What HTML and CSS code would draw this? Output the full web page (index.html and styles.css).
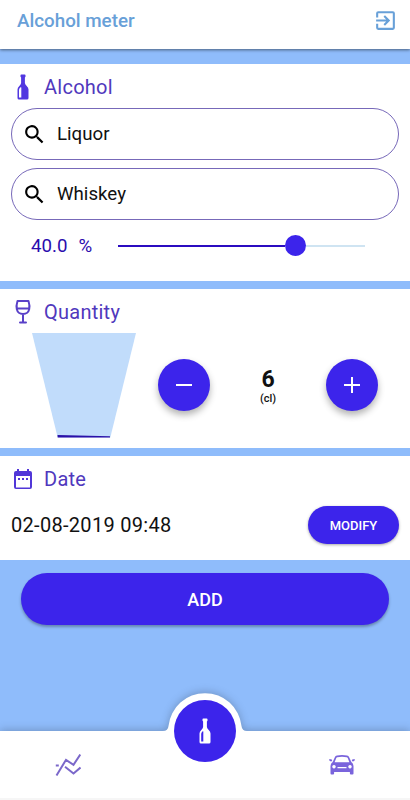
FILE: index.html
```html
<!DOCTYPE html>
<html lang="en">
<head>
<meta charset="UTF-8" />
<meta name="viewport" content="width=device-width, initial-scale=1" />
<title>Alcohol meter</title>
<link rel="stylesheet" href="styles.css">
</head>
<body>

<header class="topbar">
  <h1>Alcohol meter</h1>
  <button class="logout" type="button" aria-label="Log out">
    <svg viewBox="0 0 24 24" width="25" height="25" fill="currentColor"><path d="M10.09 15.59 11.5 17l5-5-5-5-1.41 1.41L12.67 11H3v2h9.67zM19 3H5a2 2 0 0 0-2 2v4h2V5h14v14H5v-4H3v4a2 2 0 0 0 2 2h14a2 2 0 0 0 2-2V5a2 2 0 0 0-2-2z"/></svg>
  </button>
</header>

<main>
  <section class="card alcohol">
    <h2>
      <svg class="icon" viewBox="0 0 24 26" width="24" height="26"><path fill="#5137e0" d="M10.300.5h3.400q.8 0 .8.800v1.500l-.6.700v5.500q.2 1.500 1.800 3 1.800 1.500 1.800 3.500v8.500q0 1.500-1.500 1.500H8q-1.500 0-1.500-1.500v-8.500q0-2 1.800-3.500 1.600-1.500 1.800-3V3.500l-.6-.7V1.300q0-.8.800-.8z"/><path fill="#fff" d="M8 16q0-1.500 1.200-2.500.8-.6 1.100 0V23.500H8z"/></svg>
      Alcohol
    </h2>
    <div class="search">
      <svg viewBox="0 0 24 24" width="25" height="25"><path d="M15.500 14h-.79l-.28-.27A6.500 6.500 0 1 0 13.730 14.430l.27.28v.79l5 4.990L20.490 19zm-6 0a4.500 4.500 0 1 1 0-9 4.500 4.500 0 0 1 0 9z"/></svg>
      <span>Liquor</span>
    </div>
    <div class="search">
      <svg viewBox="0 0 24 24" width="25" height="25"><path d="M15.500 14h-.79l-.28-.27A6.500 6.500 0 1 0 13.730 14.430l.27.28v.79l5 4.990L20.490 19zm-6 0a4.500 4.500 0 1 1 0-9 4.500 4.500 0 0 1 0 9z"/></svg>
      <span>Whiskey</span>
    </div>
    <div class="degree">
      <span class="value">40.0</span>
      <span class="unit">%</span>
      <div class="slider">
        <div class="filled"></div>
        <div class="thumb"></div>
        <div class="rest"></div>
      </div>
    </div>
  </section>

  <section class="card quantity">
    <h2>
      <svg class="icon" viewBox="0 0 24 26" width="24" height="26" fill="none" stroke="#5940c8" stroke-width="2" stroke-linecap="round" stroke-linejoin="round"><path d="M6.500 2h11c1.600 5 2 13-5.500 13S4.900 7 6.500 2zM6 9.500h12M12 15v8M9 23.500h6"/></svg>
      Quantity
    </h2>
    <div class="pour">
      <svg class="glass" viewBox="0 0 104 105" width="104" height="105"><path fill="#c1dcfb" d="M0 0h104L78.300 104.500H25.700z"/><path fill="#2a10a8" d="M25.500 102 78 103.300v1.200H25.700z"/></svg>
      <button class="round" type="button" aria-label="Less">
        <svg viewBox="0 0 16 16" width="16" height="16"><path d="M0 8h16"/></svg>
      </button>
      <div class="amount">
        <strong>6</strong>
        <small>(cl)</small>
      </div>
      <button class="round" type="button" aria-label="More">
        <svg viewBox="0 0 16 16" width="16" height="16"><path d="M0 8h16M8 0v16"/></svg>
      </button>
    </div>
  </section>

  <section class="card date">
    <h2>
      <svg class="icon" viewBox="0 0 24 24" width="24" height="24" fill="#5137d8"><path d="M19 4h-1V2h-2v2H8V2H6v2H5a2 2 0 0 0-2 2v14a2 2 0 0 0 2 2h14a2 2 0 0 0 2-2V6a2 2 0 0 0-2-2zm0 16.500H5V9h14zM7 11h2v2H7zm4 0h2v2h-2zm4 0h2v2h-2z"/></svg>
      Date
    </h2>
    <div class="when">
      <span>02-08-2019 09:48</span>
      <button class="modify" type="button">MODIFY</button>
    </div>
  </section>

  <button class="add" type="button">ADD</button>
</main>

<nav class="tabbar">
  <!-- white bar with the bump around the middle button -->
  <svg class="tabbar-shape" viewBox="0 0 410 110" width="410" height="110"><path fill="#fff" d="M0 41h163q5 0 5.500-5a36.700 36.700 0 0 1 73 0q.5 5 5.500 5h163v69H0z"/></svg>
  <a class="tab" href="#" aria-label="Statistics">
    <svg viewBox="0 0 26 22" width="26" height="22" fill="none" stroke="#7b68ca" stroke-width="2"><path d="M1.500 21.500 11 5.800l7.500 5L25.300.5M10 12.800l8.500 6.700 7-6M.8 11.500h3"/></svg>
  </a>
  <a class="tab-main" href="#" aria-label="Add a drink">
    <svg viewBox="0 0 24 26" width="24" height="26"><path fill="#fff" d="M10.300.5h3.400q.8 0 .8.800v1.500l-.6.700v5.500q.2 1.500 1.800 3 1.800 1.500 1.800 3.500v8.500q0 1.500-1.500 1.500H8q-1.500 0-1.500-1.500v-8.500q0-2 1.800-3.500 1.600-1.500 1.800-3V3.500l-.6-.7V1.300q0-.8.800-.8z"/><path fill="#3c24eb" d="M8.200 16q0-1.500 1.200-2.500.6-.5.900 0V23.500H8.200z"/></svg>
  </a>
  <a class="tab" href="#" aria-label="Driving">
    <svg viewBox="0 0 26 20" width="26" height="20"><path fill="#7a64dc" fill-rule="evenodd" d="M8 .500Q13-.4 18 .500q1.600.3 2.300 1.900L22.300 7q2.200 1.600 2.200 4v7.500q0 1-1 1h-1.600q-1 0-1-1V17H5.100v1.500q0 1-1 1H2.500q-1 0-1-1V11q0-2.400 2.200-4l2-4.600Q6.400.8 8 .500zM8.300 2.200q-.7.100-1 .9L5.600 7.200h14.800l-1.700-4.100q-.3-.8-1-.9-4.700-.7-9.400 0zM5 10a1.700 1.700 0 1 0 .01 0zM21 10a1.700 1.700 0 1 0 .01 0zM8.500 12v1.200h9V12zM0 4.300h2.500l.8 1.900H1.200Q.200 5.800 0 4.300zM26 4.300h-2.500l-.8 1.900h2.100q1-.4 1.200-1.900z"/></svg>
  </a>
</nav>

</body>
</html>
```
FILE: styles.css
```css
* { box-sizing: border-box; }
body { margin: 0; height: 800px; display: flex; flex-direction: column; overflow: hidden; background: #8fbcfb; font-family: Roboto, sans-serif; color: #111; }
h1, h2 { margin: 0; font-weight: 400; }
button { border: 0; padding: 0; font-family: inherit; color: #fff; background: #3c24eb; cursor: pointer; }
svg { display: block; flex: none; }

.topbar { height: 49px; padding: 0 12px 8px 17px; display: flex; align-items: center; justify-content: space-between; background: #fff; box-shadow: 0 1px 3px rgba(0, 0, 0, .5); }
.topbar h1 { font-size: 18.8px; font-weight: 500; color: #68a0d8; }
.logout { background: none; color: #68a0d8; }

main { flex: 1; display: flex; flex-direction: column; gap: 8px; padding-top: 15px; }
.card { background: #fff; padding: 0 11px; }
.card h2 { display: flex; align-items: center; gap: 9px; height: 44px; padding-top: 2px; font-size: 20px; letter-spacing: .25px; color: #5038bd; }

.alcohol { height: 217px; }
.search { display: flex; align-items: center; gap: 10px; height: 52px; padding-left: 10px; margin-bottom: 8px; border: 1px solid #7769b9; border-radius: 26px; font-size: 18.7px; }
.degree { display: flex; align-items: center; height: 35px; padding: 0 34px 0 20px; font-size: 18.7px; color: #2b0cae; }
.unit { margin-left: 11px; }
.slider { flex: 1; display: flex; align-items: center; margin-left: 26px; }
.filled { width: 167px; height: 2px; background: #2b0cc0; }
.thumb { width: 21px; height: 21px; border-radius: 50%; background: #3c24eb; }
.rest { flex: 1; height: 2px; background: #cfe4f2; }

.quantity { height: 159px; }
.pour { display: flex; padding: 0 21px; }
.round { display: flex; align-items: center; justify-content: center; width: 52px; height: 52px; margin-top: 26px; border-radius: 50%; box-shadow: 0 4px 7px rgba(0, 0, 0, .3); }
.round svg { fill: none; stroke: #fff; stroke-width: 2; }
.glass + .round { margin-left: 22px; }
.amount { flex: 1; display: flex; flex-direction: column; align-items: center; padding-top: 33px; }
.amount strong { font-size: 23px; line-height: 27px; }
.amount small { font-size: 11px; line-height: 12px; font-weight: 500; }

.date { height: 104px; }
.when { display: flex; align-items: center; justify-content: space-between; padding-top: 6px; font-size: 20px; letter-spacing: .3px; }
.modify { width: 91px; height: 38px; border-radius: 19px; font-size: 13px; font-weight: 500; box-shadow: 0 1px 3px rgba(0, 0, 0, .35); }
.add { height: 52px; margin: 5px 21px 0; border-radius: 26px; font-size: 18px; font-weight: 500; box-shadow: 0 2px 3px rgba(0, 0, 0, .3); }

.tabbar { position: relative; display: flex; justify-content: space-between; align-items: center; height: 69px; padding: 0 55px; border-bottom: 2px solid #f6f6f6; }
.tabbar-shape { position: absolute; left: 0; bottom: -2px; z-index: -1; filter: drop-shadow(0 -1px 4px rgba(0, 0, 0, .22)); }
.tab-main { display: flex; align-items: center; justify-content: center; width: 62px; height: 62px; margin-top: -67px; border-radius: 50%; background: #3c24eb; }
```
